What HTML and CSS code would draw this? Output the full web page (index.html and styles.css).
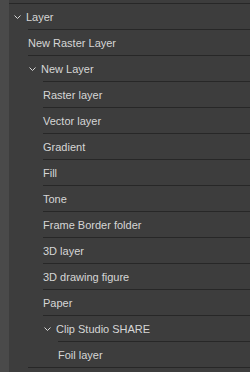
FILE: index.html
```html
<!DOCTYPE html>
<html lang="en">
<head>
    <meta charset="UTF-8">
    <meta name="viewport" content="width=device-width, initial-scale=1.0">
    <title>Layer menu</title>
    <link rel="stylesheet" href="styles.css">
</head>
<body>
    <div class="panel">
        <div class="strip"></div>
        <div class="tree">
            <div class="row lv0 folder"><svg class="chev" viewBox="0 0 7 4"><polyline points="0.5,0.5 3.5,3.5 6.5,0.5"/></svg><span>Layer</span></div>
            <div class="row lv1">New Raster Layer</div>
            <div class="row lv1 folder"><svg class="chev" viewBox="0 0 7 4"><polyline points="0.5,0.5 3.5,3.5 6.5,0.5"/></svg><span>New Layer</span></div>
            <div class="row lv2">Raster layer</div>
            <div class="row lv2">Vector layer</div>
            <div class="row lv2">Gradient</div>
            <div class="row lv2">Fill</div>
            <div class="row lv2">Tone</div>
            <div class="row lv2">Frame Border folder</div>
            <div class="row lv2">3D layer</div>
            <div class="row lv2">3D drawing figure</div>
            <div class="row lv2">Paper</div>
            <div class="row lv2 folder"><svg class="chev" viewBox="0 0 7 4"><polyline points="0.5,0.5 3.5,3.5 6.5,0.5"/></svg><span>Clip Studio SHARE</span></div>
            <div class="row lv3">Foil layer</div>
            <div class="row lv1"></div>
        </div>
    </div>
</body>
</html>
```
FILE: styles.css
```css
html, body {
    margin: 0;
    padding: 0;
    height: 100%;
    overflow: hidden;
}

body {
    background-color: #3d3d3d;
    font-family: 'Liberation Sans', Arial, sans-serif;
    font-size: 11px;
    color: #d6d6d6;
}

.panel {
    display: flex;
    height: 100%;
}

.strip {
    width: 9px;
    flex-shrink: 0;
    background-color: #4a4a4a;
}

.tree {
    flex: 1;
    padding-top: 3px;
}

.row {
    display: flex;
    align-items: center;
    height: 25px;
    border-top: 1px solid #272727;
    white-space: nowrap;
}

.lv0 { margin-left: 0; padding-left: 5px; }
.lv1 { margin-left: 19px; }
.lv2 { margin-left: 34px; }
.lv3 { margin-left: 49px; }

.chev {
    width: 7px;
    height: 4px;
    margin: 1px 5px 0 1px;
    flex-shrink: 0;
}

.lv0 .chev {
    margin-left: 0;
}

.chev polyline {
    fill: none;
    stroke: #d6d6d6;
    stroke-width: 1;
}
```
